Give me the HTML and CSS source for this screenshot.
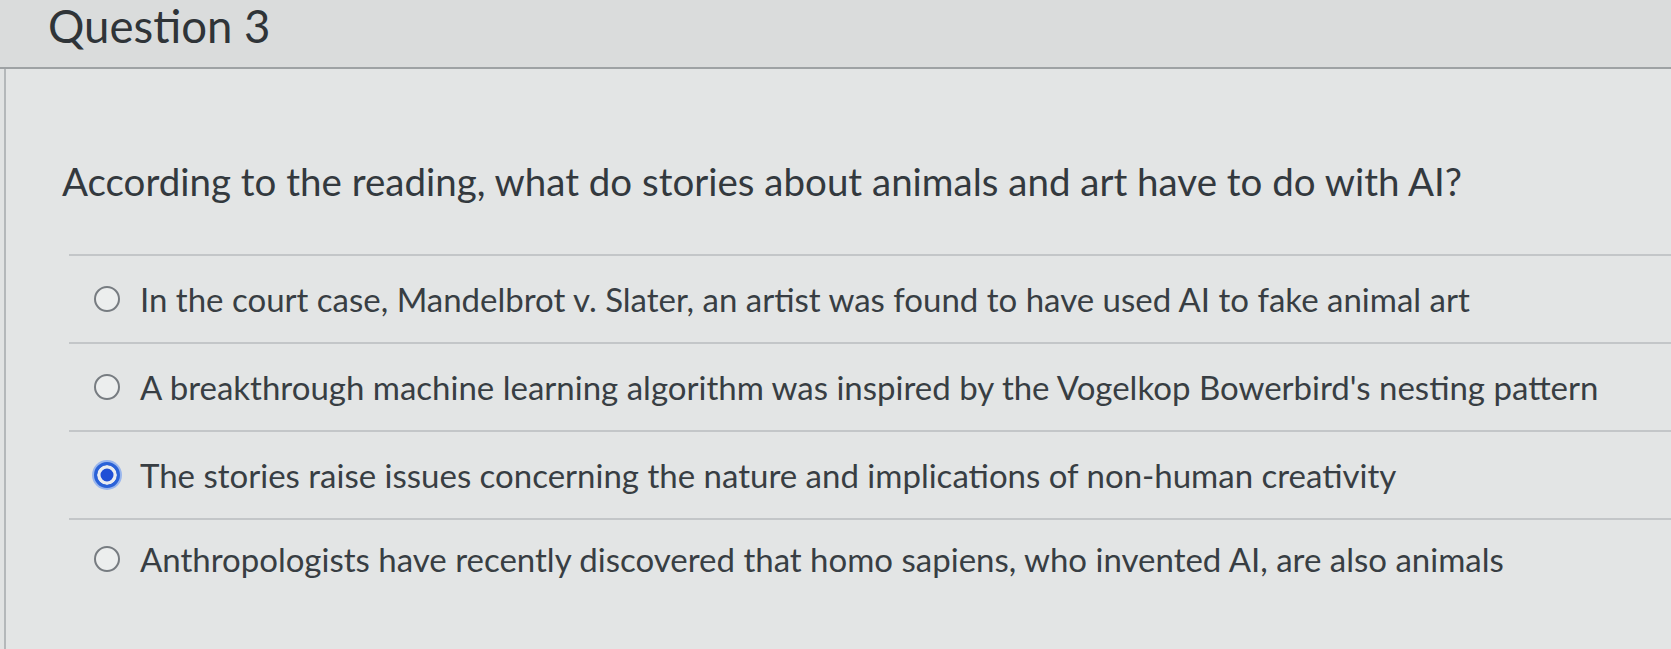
FILE: index.html
```html
<!DOCTYPE html>
<html lang="en">
<head>
<meta charset="utf-8">
<title>Question 3</title>
<link rel="stylesheet" href="styles.css">
</head>
<body>
<div class="quiz">
  <div class="q-header"><h2 class="q-title">Question 3</h2></div>
  <div class="q-body">
    <p class="q-text">According to the reading, what do stories about animals and art have to do with AI?</p>
    <div class="answers">
      <label class="answer"><span class="radio"></span><span class="a-text">In the court case, Mandelbrot v. Slater, an artist was found to have used AI to fake animal art</span></label>
      <label class="answer"><span class="radio"></span><span class="a-text">A breakthrough machine learning algorithm was inspired by the Vogelkop Bowerbird's nesting pattern</span></label>
      <label class="answer"><span class="radio checked"></span><span class="a-text">The stories raise issues concerning the nature and implications of non-human creativity</span></label>
      <label class="answer"><span class="radio"></span><span class="a-text">Anthropologists have recently discovered that homo sapiens, who invented AI, are also animals</span></label>
    </div>
  </div>
</div>
</body>
</html>
```

FILE: styles.css
```css
html, body {
  margin: 0;
  padding: 0;
}
body {
  background: #e1e3e3;
  font-family: Lato, "Open Sans", sans-serif;
  color: #363c41;
  width: 1671px;
  height: 649px;
  overflow: hidden;
}
.quiz {
  display: flex;
  flex-direction: column;
  height: 649px;
}
.q-header {
  background: #dadcdc;
  height: 67px;
  border-bottom: 2px solid #9ea2a4;
  padding-left: 48px;
  display: flex;
  align-items: flex-start;
}
.q-title {
  margin: 0;
  font-weight: 400;
  font-size: 45.5px;
  line-height: 51px;
  color: #2f3438;
}
.q-body {
  flex: 1;
  margin-left: 4px;
  border-left: 2px solid #b4b8ba;
  padding-top: 90px;
  background: #e3e5e5;
}
.q-text {
  margin: 0 0 51px 56px;
  font-size: 38.5px;
  line-height: 44px;
  color: #33393e;
}
.answers {
  margin-left: 63px;
}
.answer {
  display: flex;
  align-items: center;
  gap: 20px;
  height: 88px;
  border-top: 2px solid #c3c6c8;
  padding-left: 25px;
  box-sizing: border-box;
  font-size: 33px;
  color: #383e43;
}
.answer:last-child {
  height: 80px;
}
.radio {
  width: 22px;
  height: 22px;
  border: 2px solid #777c81;
  border-radius: 50%;
  flex: none;
  background: #eceeee;
}
.radio.checked {
  border: 3px solid #2a62d8;
  width: 20px;
  height: 20px;
  background: #1f4fd6;
  box-shadow: inset 0 0 0 3.5px #e9ecf0, 0 0 0 2px #9ab6ec;
}
.a-text {
  line-height: 40px;
}
```
